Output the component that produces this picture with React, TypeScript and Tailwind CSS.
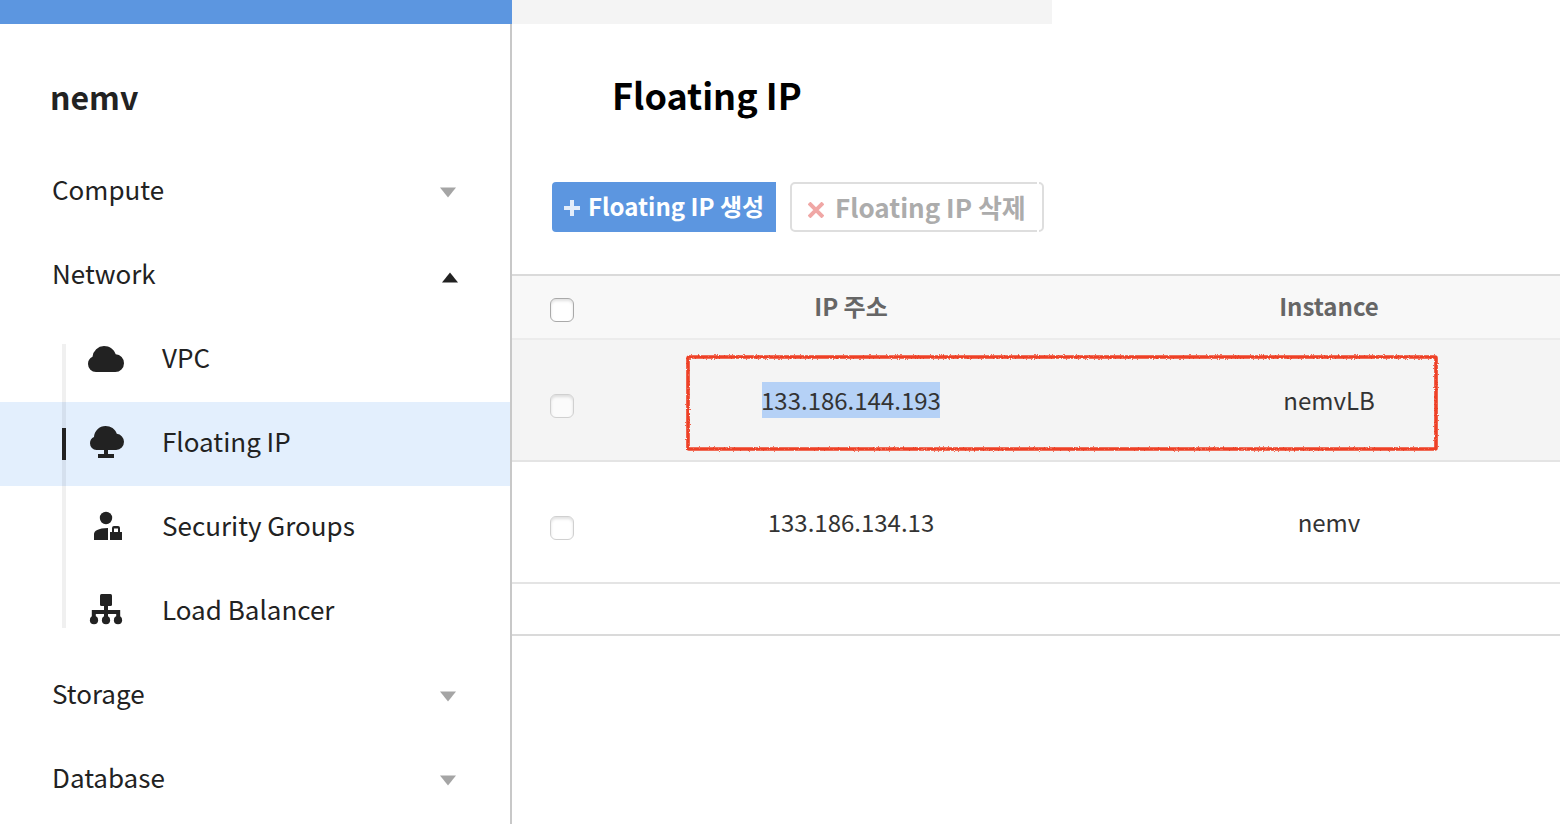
import type { ReactNode } from "react";

const CloudIcon = () => (
  <svg className="-mt-[2px]" width="40" height="36" viewBox="0 0 40 36" fill="#222">
    <path d="M10 31a8 8 0 0 1-8-8 8 8 0 0 1 4.500-7.200A11.800 11.800 0 0 1 18 5c5.600 0 10 3.200 11.700 8.200A8.900 8.900 0 0 1 38 22.200 8.800 8.800 0 0 1 29.300 31z" />
  </svg>
);

const CloudStandIcon = () => (
  <svg className="-mt-[4px]" width="40" height="36" viewBox="0 0 40 36" fill="#222">
    <path d="M10.500 26a6.700 6.700 0 0 1-6.500-6.800 6.700 6.700 0 0 1 4-6.200A11.500 11.500 0 0 1 19.500 2c5.300 0 9.700 3 11.300 7.800A8.100 8.100 0 0 1 38 17.800a8.100 8.100 0 0 1-7.800 8.200H22V30h6v4H12v-4h6v-4z" />
  </svg>
);

const UserLockIcon = () => (
  <svg width="40" height="36" viewBox="0 0 40 36" fill="#222">
    <circle cx="20" cy="8" r="6.200" />
    <path d="M8 30v-6C8 21 12 18.200 22 18v12z" />
    <path fillRule="evenodd" d="M24 22h2V18q0-2 2-2h4q2 0 2 2v4h2V30H24zM28 18.500v3.500h4v-3.500z" />
  </svg>
);

const BalancerIcon = () => (
  <svg className="-mt-[4px]" width="40" height="36" viewBox="0 0 40 36" fill="#222">
    <rect x="14" y="2" width="12" height="12" rx="1.500" />
    <path d="M7.800 29V20h24.400v9" fill="none" stroke="#222" strokeWidth="4" />
    <path d="M18 13h4v16h-4z" />
    <circle cx="8" cy="28.200" r="4.100" />
    <circle cx="20" cy="28.200" r="4.100" />
    <circle cx="32" cy="28.200" r="4.100" />
  </svg>
);

function Group({ label, open = false }: { label: string; open?: boolean }) {
  return (
    <div className="flex h-[84px] items-center justify-between pr-[51px] pl-[52px]">
      <span className="pb-[6px] text-[26px] leading-[40px]">{label}</span>
      {open ? (
        <svg className="mt-[2px]" width="18" height="11" viewBox="0 0 18 11">
          <path d="M1 10.500 9 0.500l8 10z" fill="#222" />
        </svg>
      ) : (
        <svg className="mr-[2px]" width="18" height="11" viewBox="0 0 18 11">
          <path d="M1 0.500h16l-8 10z" fill="#a5a5a5" />
        </svg>
      )}
    </div>
  );
}

function SubItem({ label, icon, active = false }: { label: string; icon: ReactNode; active?: boolean }) {
  return (
    <div className={`relative flex h-[84px] items-center pl-[86px] ${active ? "bg-[#e3effd]" : ""}`}>
      {icon}
      <span className="pb-[6px] pl-9 text-[26px] leading-[40px]">{label}</span>
      {active && <span className="absolute top-[26px] left-[62px] z-10 h-8 w-1 bg-[#222]" />}
    </div>
  );
}

function Check({ strong = false }: { strong?: boolean }) {
  return (
    <span
      className={`block size-6 rounded-[6px] border shadow-[inset_0_2px_3px_rgba(0,0,0,0.12)] ${
        strong ? "mt-[6px] border-[#a9a9a9] bg-white" : "mt-3 border-[#d0d0d0] bg-white/60"
      }`}
    />
  );
}

const cols = "grid w-[1056px] grid-cols-[100px_478px_478px] items-center justify-items-center";

export default function App() {
  return (
    <div className="flex h-[824px] w-[1560px] overflow-hidden bg-white font-['Noto_Sans_CJK_KR',sans-serif] text-[#222]">
      <aside className="flex w-[512px] shrink-0 flex-col">
        <div className="h-6 shrink-0 bg-[#5c96e0]" />
        <div className="grow border-r-2 border-[#c8c8c8]">
          <h1 className="h-[126px] pt-[47px] pl-[50px] text-[32px] leading-[50px] font-bold">nemv</h1>
          <nav>
            <Group label="Compute" />
            <Group label="Network" open />
            <div className="relative">
              <SubItem label="VPC" icon={<CloudIcon />} />
              <SubItem label="Floating IP" icon={<CloudStandIcon />} active />
              <SubItem label="Security Groups" icon={<UserLockIcon />} />
              <SubItem label="Load Balancer" icon={<BalancerIcon />} />
              <span className="absolute top-[26px] left-[62px] h-[284px] w-1 bg-black/6" />
            </div>
            <Group label="Storage" />
            <Group label="Database" />
          </nav>
        </div>
      </aside>

      <main className="w-[1048px] shrink-0 overflow-hidden">
        <div className="h-6 w-[540px] bg-[#f4f4f4]" />
        <h2 className="h-[158px] pt-[42px] pl-[100px] text-[36px] leading-[56px] font-bold text-black">Floating IP</h2>
        <div className="flex h-[92px] items-start gap-[14px] pl-10">
          <button className="flex h-[50px] w-56 items-center rounded-l-[4px] bg-[#5c96e0] pl-3 text-[24px] leading-[50px] font-bold text-white">
            <svg className="mt-[2px] mr-2 shrink-0" width="16" height="16" viewBox="0 0 16 16">
              <path d="M8 0v16M0 8h16" stroke="#e3edfa" strokeWidth="4" />
            </svg>
            <span className="-mt-[3px] whitespace-nowrap">Floating IP 생성</span>
          </button>
          <button className="relative flex h-[50px] w-[254px] items-center rounded-[5px] border-2 border-[#dedede] pl-4 text-[26px] leading-[46px] font-bold text-[#acacac]">
            <svg className="mt-[5px] mr-[11px] shrink-0" width="16" height="16" viewBox="0 0 16 16">
              <path d="m1 1 14 14M15 1 1 15" stroke="#f0a7a5" strokeWidth="4" />
            </svg>
            <span className="whitespace-nowrap">Floating IP 삭제</span>
            <span className="absolute -top-[2px] right-[3px] h-[2px] w-[2px] bg-white" />
            <span className="absolute right-[3px] -bottom-[2px] h-[2px] w-[2px] bg-white" />
          </button>
        </div>

        <section className="relative">
          <div className={`${cols} h-[66px] border-y-2 border-t-[#dadada] border-b-[#ececec] bg-[#f8f8f8] text-[24px] font-bold text-[#666]`}>
            <Check strong />
            <span className="pb-[2px]">IP 주소</span>
            <span className="pb-[2px]">Instance</span>
          </div>
          <div className={`${cols} h-[122px] border-b-2 border-[#e4e4e4] bg-[#f4f4f4] text-[24px] text-[#333]`}>
            <Check />
            <span className="w-[178px] bg-[#b5d1f6] indent-[-1px] leading-[36px] whitespace-nowrap">133.186.144.193</span>
            <span>nemvLB</span>
          </div>
          <div className={`${cols} h-[122px] border-b-2 border-[#e4e4e4] text-[24px] text-[#333]`}>
            <Check />
            <span>133.186.134.13</span>
            <span>nemv</span>
          </div>
          <div className="h-[52px] border-b-2 border-[#dadada]" />
          <svg className="absolute top-[78px] left-[170px]" width="762" height="104" viewBox="0 0 762 104">
            <filter id="rough" x="0" y="0" width="762" height="104" filterUnits="userSpaceOnUse" colorInterpolationFilters="sRGB">
              <feTurbulence type="fractalNoise" baseFrequency="0.8" numOctaves="1" seed="4" />
              <feDisplacementMap in="SourceGraphic" scale="3" xChannelSelector="R" yChannelSelector="G" />
            </filter>
            <rect x="6" y="5" width="748" height="92" rx="1" fill="none" stroke="#ee4026" strokeWidth="3.600" filter="url(#rough)" />
          </svg>
        </section>
      </main>
    </div>
  );
}
